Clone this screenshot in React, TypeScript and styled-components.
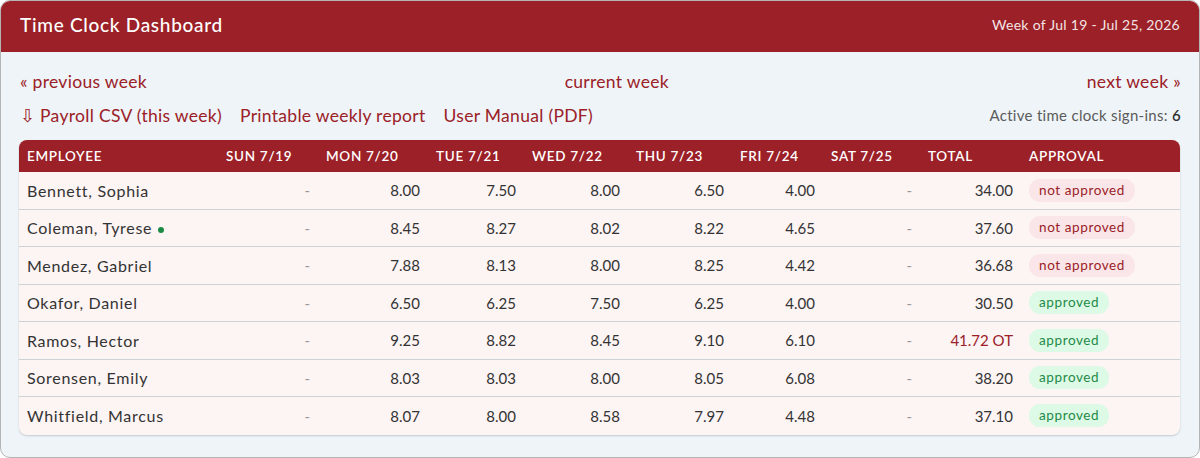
import React, {FC} from "react";
import styled, {createGlobalStyle} from "styled-components";

const GlobalStyle = createGlobalStyle`
  html, body {
    margin: 0;
    padding: 0;
    background: #ffffff;
  }
  body {
    font-family: "Lato", "Noto Sans", sans-serif;
  }
  * {
    box-sizing: border-box;
  }
`

const Frame = styled.div`
  width: 1200px;
  height: 458px;
  border: 1px solid #b4b4b4;
  border-radius: 10px;
  background: #eef4f8;
  overflow: hidden;
`
const TopBar = styled.header`
  height: 51px;
  background: #9b2027;
  color: #fff;
  display: flex;
  justify-content: space-between;
  align-items: center;
  padding: 0 19px 5px 19px;

  h1 {
    margin: 0;
    font-size: 19px;
    font-weight: 500;
    letter-spacing: 0.7px;
  }

  .range {
    font-size: 14px;
    color: #f4e4e5;
    letter-spacing: 0.3px;
  }
`
const Body = styled.div`
  padding: 16px 18px 0 18px;
`
const NavRow = styled.div`
  display: flex;
  justify-content: space-between;
  align-items: center;
  height: 26px;
  padding-left: 1px;
`
const LinkRow = styled.div`
  display: flex;
  align-items: center;
  justify-content: space-between;
  height: 26px;
  margin-top: 8px;
  padding-left: 1px;
`
const Links = styled.div`
  display: flex;
  gap: 18px;
`
const Link = styled.a`
  color: #9b2027;
  font-size: 17.5px;
  text-decoration: none;
  letter-spacing: 0.3px;
  cursor: pointer;
`
const Active = styled.div`
  font-size: 15px;
  color: #5b5b5b;
  letter-spacing: 0.3px;

  b {
    color: #333;
    font-weight: 600;
  }
`
const Table = styled.table`
  margin-top: 12px;
  width: 1161px;
  border-collapse: separate;
  border-spacing: 0;
  table-layout: fixed;
  border-radius: 8px;
  overflow: hidden;
  box-shadow: 0 1px 2px rgba(0, 0, 0, 0.18);
  background: #fdf4f4;
`
const Th = styled.th`
  background: #9b2027;
  color: #fff;
  height: 32px;
  padding: 0 8px;
  font-size: 13.5px;
  font-weight: 600;
  text-align: left;
  letter-spacing: 0.7px;
  text-transform: uppercase;
`
const Td = styled.td<{ $align?: "left" | "right" }>`
  height: 37.5px;
  padding: 0 8px;
  font-size: 15px;
  color: #333;
  text-align: ${p => p.$align || "right"};
  border-bottom: 1px solid #cdd2d6;
  white-space: nowrap;

  tr:last-child & {
    border-bottom: none;
  }
`
const Name = styled.span`
  font-size: 16px;
  letter-spacing: 0.7px;
`
const Dash = styled.span`
  color: #9a9a9a;
`
const Overtime = styled.span`
  color: #9b2027;
`
const OnlineDot = styled.span`
  display: inline-block;
  width: 6px;
  height: 6px;
  border-radius: 50%;
  background: #1a8a45;
  margin-left: 6px;
  vertical-align: middle;
`
const Pill = styled.span<{ $ok: boolean }>`
  display: inline-block;
  padding: 3px 10px 4px;
  border-radius: 11px;
  font-size: 13.5px;
  letter-spacing: 0.6px;
  background: ${p => p.$ok ? "#dcfae6" : "#fae6e8"};
  color: ${p => p.$ok ? "#1f8a47" : "#9b2027"};
`

interface Row {
  name: string
  online?: boolean
  days: (string | null)[]
  total: string
  ot?: boolean
  approved: boolean
}

const rows: Row[] = [
  {name: "Bennett, Sophia", days: [null, "8.00", "7.50", "8.00", "6.50", "4.00", null], total: "34.00", approved: false},
  {name: "Coleman, Tyrese", online: true, days: [null, "8.45", "8.27", "8.02", "8.22", "4.65", null], total: "37.60", approved: false},
  {name: "Mendez, Gabriel", days: [null, "7.88", "8.13", "8.00", "8.25", "4.42", null], total: "36.68", approved: false},
  {name: "Okafor, Daniel", days: [null, "6.50", "6.25", "7.50", "6.25", "4.00", null], total: "30.50", approved: true},
  {name: "Ramos, Hector", days: [null, "9.25", "8.82", "8.45", "9.10", "6.10", null], total: "41.72 OT", ot: true, approved: true},
  {name: "Sorensen, Emily", days: [null, "8.03", "8.03", "8.00", "8.05", "6.08", null], total: "38.20", approved: true},
  {name: "Whitfield, Marcus", days: [null, "8.07", "8.00", "8.58", "7.97", "4.48", null], total: "37.10", approved: true},
]

const days = ["Sun 7/19", "Mon 7/20", "Tue 7/21", "Wed 7/22", "Thu 7/23", "Fri 7/24", "Sat 7/25"]
const widths = [199, 100, 110, 96, 104, 104, 91, 97, 101, 159]

const App: FC = () => {
  return (
    <>
      <GlobalStyle/>
      <Frame>
        <TopBar>
          <h1>Time Clock Dashboard</h1>
          <span className="range">Week of Jul 19 - Jul 25, 2026</span>
        </TopBar>
        <Body>
          <NavRow>
            <Link>« previous week</Link>
            <Link>current week</Link>
            <Link>next week »</Link>
          </NavRow>
          <LinkRow>
            <Links>
              <Link>⇩ Payroll CSV (this week)</Link>
              <Link>Printable weekly report</Link>
              <Link>User Manual (PDF)</Link>
            </Links>
            <Active>Active time clock sign-ins: <b>6</b></Active>
          </LinkRow>
          <Table>
            <colgroup>
              {widths.map((w, i) => <col key={i} style={{width: w}}/>)}
            </colgroup>
            <thead>
              <tr>
                <Th>Employee</Th>
                {days.map(d => <Th key={d}>{d}</Th>)}
                <Th>Total</Th>
                <Th>Approval</Th>
              </tr>
            </thead>
            <tbody>
              {rows.map(r => (
                <tr key={r.name}>
                  <Td $align="left"><Name>{r.name}</Name>{r.online && <OnlineDot/>}</Td>
                  {r.days.map((d, i) => (
                    <Td key={i}>{d ? d : <Dash>-</Dash>}</Td>
                  ))}
                  <Td>{r.ot ? <Overtime>{r.total}</Overtime> : r.total}</Td>
                  <Td $align="left">
                    <Pill $ok={r.approved}>{r.approved ? "approved" : "not approved"}</Pill>
                  </Td>
                </tr>
              ))}
            </tbody>
          </Table>
        </Body>
      </Frame>
    </>
  )
}

export default App
